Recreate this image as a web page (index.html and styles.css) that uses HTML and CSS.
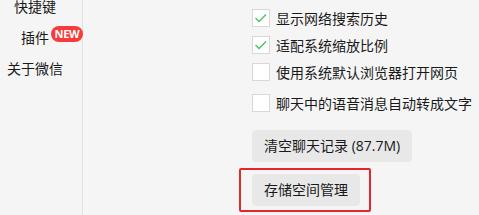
FILE: index.html
```html
<!DOCTYPE html>
<html lang="zh-CN">
<head>
<meta charset="utf-8">
<title>设置</title>
<link rel="stylesheet" href="styles.css">
</head>
<body>
<div class="window">
  <nav class="sidebar">
    <div class="nav-item">快捷键</div>
    <div class="nav-item"><span class="nav-label">插件<span class="badge">NEW</span></span></div>
    <div class="nav-item">关于微信</div>
  </nav>
  <main class="content">
    <div class="option">
      <span class="box checked"><svg viewBox="0 0 18 18" width="18" height="18"><path d="M3.5 9 L7 12.5 L14 5.5" fill="none" stroke="#45c25f" stroke-width="1.3"/></svg></span>
      <span class="label">显示网络搜索历史</span>
    </div>
    <div class="option">
      <span class="box checked"><svg viewBox="0 0 18 18" width="18" height="18"><path d="M3.5 9 L7 12.5 L14 5.5" fill="none" stroke="#45c25f" stroke-width="1.3"/></svg></span>
      <span class="label">适配系统缩放比例</span>
    </div>
    <div class="option">
      <span class="box"></span>
      <span class="label">使用系统默认浏览器打开网页</span>
    </div>
    <div class="option option-last">
      <span class="box"></span>
      <span class="label">聊天中的语音消息自动转成文字</span>
    </div>
    <div class="buttons">
      <button class="btn">清空聊天记录 (87.7M)</button>
      <div class="highlight-wrap">
        <button class="btn">存储空间管理</button>
        <span class="highlight"></span>
      </div>
    </div>
  </main>
</div>
</body>
</html>
```

FILE: styles.css
```css
html, body {
  margin: 0;
  padding: 0;
  background: #f5f5f5;
  overflow: hidden;
}
body {
  font-family: "Noto Sans CJK SC", "Noto Sans", sans-serif;
  font-size: 14px;
  color: #191919;
}
.window {
  display: flex;
  height: 215px;
}
.sidebar {
  width: 82px;
  border-right: 1px solid #e2e2e2;
  display: flex;
  flex-direction: column;
  margin-top: -9px;
}
.nav-item {
  width: 70px;
  height: 31px;
  line-height: 31px;
  text-align: center;
}
.nav-label {
  position: relative;
}
.badge {
  position: absolute;
  left: 30px;
  top: -1px;
  width: 32px;
  height: 16px;
  line-height: 16px;
  border-radius: 8px;
  background: #f53c3c;
  color: #fff;
  font-family: "Noto Sans", sans-serif;
  font-size: 11px;
  font-weight: 700;
  text-align: center;
  letter-spacing: -0.2px;
}
.content {
  flex: 1;
  padding: 9px 0 0 169px;
  display: flex;
  flex-direction: column;
}
.option {
  display: flex;
  align-items: center;
  gap: 6px;
  height: 18px;
  margin-bottom: 9px;
}
.option-last {
  margin-top: 4px;
  margin-bottom: 18px;
}
.box {
  box-sizing: border-box;
  width: 18px;
  height: 18px;
  border: 1px solid #d8d8d8;
  background: #fff;
  position: relative;
  flex: none;
}
.box svg {
  position: absolute;
  left: -1px;
  top: -1px;
}
.label {
  line-height: 18px;
  white-space: nowrap;
}
.buttons {
  display: flex;
  flex-direction: column;
  align-items: flex-start;
  gap: 12px;
}
.btn {
  height: 32px;
  padding: 0 12px;
  border: none;
  border-radius: 4px;
  background: #e8e8e8;
  color: #191919;
  font-family: "Open Sans", "Noto Sans CJK SC", sans-serif;
  font-size: 14px;
  line-height: 32px;
  white-space: nowrap;
}
.highlight-wrap {
  position: relative;
}
.highlight {
  position: absolute;
  left: -13px;
  top: -6px;
  right: -11px;
  bottom: -6px;
  border: 2px solid #e5262c;
  border-radius: 2px;
  pointer-events: none;
}
```
